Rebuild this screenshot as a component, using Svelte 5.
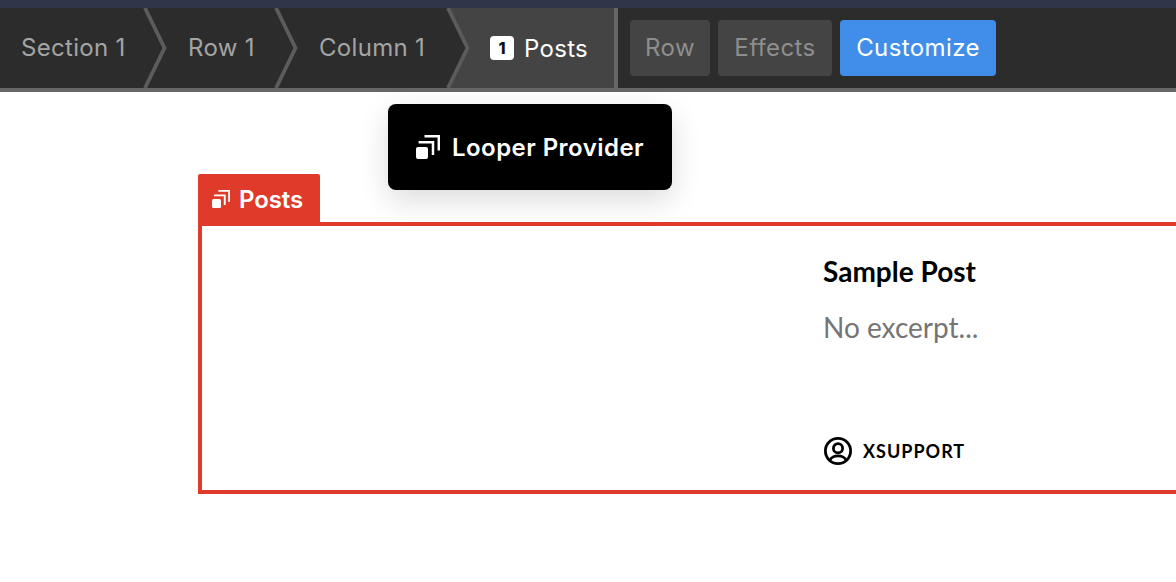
<script>
  const crumbs = [
    { label: 'Section 1', width: 145 },
    { label: 'Row 1', width: 131 },
    { label: 'Column 1', width: 172 }
  ];
</script>

<div class="page">
  <div class="topstrip"></div>
  <header class="toolbar">
    <nav class="crumbs">
      {#each crumbs as c}
        <div class="crumb" style="width:{c.width}px">
          <span>{c.label}</span>
          <svg class="chev" viewBox="0 0 26 80" width="26" height="80" aria-hidden="true">
            <path d="M2 0 L21.5 40 L2 80" fill="#2c2c2c" stroke="#5c5c5c" stroke-width="3.8"/>
          </svg>
        </div>
      {/each}
      <div class="crumb active">
        <span class="badge">1</span>
        <span>Posts</span>
      </div>
    </nav>
    <div class="actions">
      <button class="btn b-row">Row</button>
      <button class="btn b-effects">Effects</button>
      <button class="btn primary">Customize</button>
    </div>
  </header>

  <div class="tooltip">
    <svg viewBox="0 0 24 24" width="24" height="24" aria-hidden="true">
      <rect x="0" y="12" width="12" height="12" rx="2" fill="#fff"/>
      <path d="M2.6 7.2 H17 V20" fill="none" stroke="#fff" stroke-width="2.5"/>
      <path d="M8.5 1.2 H22.8 V15.5" fill="none" stroke="#fff" stroke-width="2.5"/>
    </svg>
    <span>Looper Provider</span>
  </div>

  <main class="canvas">
    <div class="tab">
      <svg viewBox="0 0 24 24" width="18" height="18" aria-hidden="true">
        <rect x="0" y="12" width="12" height="12" rx="2" fill="#fff"/>
        <path d="M2.6 7.2 H17 V20" fill="none" stroke="#fff" stroke-width="2.5"/>
        <path d="M8.5 1.2 H22.8 V15.5" fill="none" stroke="#fff" stroke-width="2.5"/>
      </svg>
      <span>Posts</span>
    </div>
    <section class="box">
      <article class="post">
        <h2>Sample Post</h2>
        <p>No excerpt...</p>
        <div class="author">
          <svg viewBox="0 0 28 28" width="28" height="28" fill="none" stroke="#000" stroke-width="2.8" aria-hidden="true">
            <circle cx="14" cy="14" r="12.6"/>
            <circle cx="14" cy="11.2" r="4.6"/>
            <path d="M6 22.8 C8 19.4 11 18.8 14 18.8 C17 18.8 20 19.4 22 22.8"/>
          </svg>
          <span>XSUPPORT</span>
        </div>
      </article>
    </section>
  </main>
</div>

<style>
  :global(body) {
    margin: 0;
    background: #fff;
    overflow: hidden;
  }
  .page {
    position: relative;
    width: 1176px;
    height: 582px;
    overflow: hidden;
    font-family: Inter, "Liberation Sans", sans-serif;
  }
  .topstrip {
    height: 8px;
    background: #30354a;
  }
  .toolbar {
    display: flex;
    align-items: stretch;
    height: 80px;
    background: #2c2c2c;
    border-bottom: 4px solid #666;
  }
  .crumbs {
    display: flex;
    align-items: stretch;
    background: #2c2c2c;
  }
  .crumb {
    position: relative;
    box-sizing: border-box;
    display: flex;
    align-items: center;
    padding-left: 21px;
    padding-bottom: 1px;
    font-size: 24px;
    letter-spacing: 0.3px;
    color: #a4a4a4;
    white-space: nowrap;
  }
  .crumb + .crumb {
    padding-left: 43px;
  }
  .chev {
    position: absolute;
    top: 0;
    right: -24px;
    z-index: 1;
  }
  .crumb.active {
    width: 170px;
    padding-left: 42px;
    padding-bottom: 0;
    gap: 10px;
    background: #444;
    color: #fff;
    border-right: 4px solid #666;
  }
  .badge {
    width: 24px;
    height: 24px;
    border-radius: 4px;
    background: #fff;
    color: #111;
    font-size: 16px;
    font-weight: 800;
    letter-spacing: 0;
    display: flex;
    align-items: center;
    justify-content: center;
  }
  .actions {
    display: flex;
    align-items: center;
    gap: 8px;
    padding-left: 12px;
  }
  .btn {
    height: 56px;
    box-sizing: border-box;
    padding: 0 0 1px;
    border: 0;
    border-radius: 4px;
    background: #444;
    color: #8e8e8e;
    font: inherit;
    font-size: 24px;
    letter-spacing: 0.4px;
  }
  .b-row { width: 80px; }
  .b-effects { width: 114px; }
  .primary {
    width: 156px;
    background: #408ee9;
    color: #fff;
  }
  .tooltip {
    position: absolute;
    left: 388px;
    top: 104px;
    width: 284px;
    height: 86px;
    box-sizing: border-box;
    padding-left: 28px;
    display: flex;
    align-items: center;
    gap: 12px;
    background: #000;
    border-radius: 8px;
    box-shadow: 0 10px 30px rgba(0, 0, 0, 0.14);
    color: #fff;
    font-size: 24px;
    font-weight: 600;
    letter-spacing: 0.45px;
    z-index: 2;
  }
  .canvas {
    padding: 82px 0 0 198px;
  }
  .tab {
    box-sizing: border-box;
    width: 122px;
    height: 48px;
    padding: 2px 0 0 14px;
    display: flex;
    align-items: center;
    gap: 9px;
    background: #e03a2b;
    border-radius: 2px 2px 0 0;
    color: #fff;
    font-size: 24px;
    font-weight: 600;
    letter-spacing: -0.1px;
  }
  .box {
    box-sizing: border-box;
    width: 1000px;
    height: 272px;
    border: 4px solid #e03a2b;
    padding: 27px 0 0 621px;
    font-family: Lato, "Liberation Sans", sans-serif;
  }
  h2 {
    margin: 0;
    font-size: 28px;
    line-height: 36px;
    font-weight: 700;
    color: #000;
  }
  p {
    margin: 21px 0 0;
    font-size: 28px;
    line-height: 34px;
    color: #757575;
  }
  .author {
    margin-top: 93px;
    display: flex;
    align-items: center;
    gap: 11px;
    padding-left: 1px;
    font-size: 18px;
    font-weight: 700;
    letter-spacing: 1px;
    color: #000;
  }
</style>
